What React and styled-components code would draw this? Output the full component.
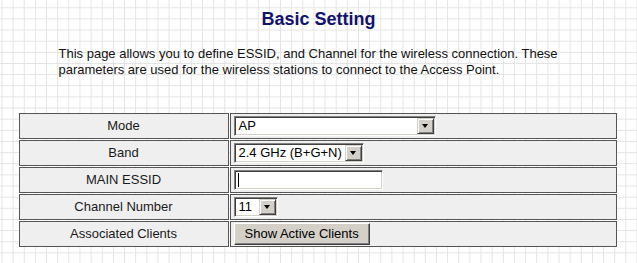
import React from 'react';
import styled, { createGlobalStyle } from 'styled-components';

const Global = createGlobalStyle`
  html, body { margin: 0; padding: 0; }
  body {
    width: 637px;
    height: 263px;
    overflow: hidden;
    background-color: #ffffff;
    background-image:
      linear-gradient(to right, #e3e3e3 1px, transparent 1px),
      linear-gradient(to bottom, #e3e3e3 1px, transparent 1px);
    background-size: 11.15px 11.15px;
    background-position: 1.5px 7.3px;
    font-family: "Liberation Sans", Arial, sans-serif;
  }
`;

const Page = styled.div`
  width: 602px;
  margin: 0 auto;
  padding-top: 8px;
`;

const Title = styled.h1`
  margin: 0;
  font-size: 18px;
  line-height: 22px;
  font-weight: bold;
  color: #12126e;
  text-align: center;
`;

const Intro = styled.p`
  margin: 15.5px 0 0 41px;
  width: 520px;
  font-size: 13px;
  line-height: 16px;
  color: #111;
`;

const Table = styled.table`
  margin-top: 34px;
  width: 600px;
  border: 0;
  border-spacing: 1px;
  border-collapse: separate;
  table-layout: fixed;
`;

const Cell = styled.td`
  box-sizing: border-box;
  height: 26px;
  padding: 0 3px;
  background: #efefef;
  border: 1px solid #555;
  font-size: 13px;
  color: #1a1a1a;
  vertical-align: middle;
`;

const LabelCell = styled(Cell)`
  width: 210px;
  text-align: center;
`;

const ValueCell = styled(Cell)`
  text-align: left;
`;

const Field = styled.div`
  display: inline-flex;
  align-items: stretch;
  box-sizing: border-box;
  width: ${(p) => p.$w}px;
  height: ${(p) => p.$h || 20}px;
  background: #fff;
  border-top: 1px solid #808080;
  border-left: 1px solid #808080;
  border-bottom: 1px solid #fff;
  border-right: 1px solid #fff;
  box-shadow: inset 1px 1px 0 #404040, inset -1px -1px 0 #d4d0c8;
  vertical-align: middle;
`;

const FieldText = styled.span`
  flex: 1;
  padding-left: 4px;
  font-size: 13px;
  line-height: 18px;
  color: #000;
  white-space: nowrap;
`;

const Arrow = styled.span`
  width: 17px;
  margin: 1px 1px 1px 0;
  box-sizing: border-box;
  background: #d4d0c8;
  border-top: 1px solid #d4d0c8;
  border-left: 1px solid #d4d0c8;
  border-right: 1px solid #404040;
  border-bottom: 1px solid #404040;
  box-shadow: inset 1px 1px 0 #fff, inset -1px -1px 0 #808080;
  display: flex;
  align-items: center;
  justify-content: center;
  &::after {
    content: '';
    width: 0;
    height: 0;
    border-left: 3.5px solid transparent;
    border-right: 3.5px solid transparent;
    border-top: 4px solid #000;
  }
`;

const Caret = styled.span`
  width: 1px;
  height: 14px;
  margin: 2px 0 0 3px;
  background: #000;
`;

const Button = styled.button`
  box-sizing: border-box;
  height: 22px;
  padding: 0 10px;
  background: #d4d0c8;
  border-top: 1px solid #fff;
  border-left: 1px solid #fff;
  border-right: 1px solid #404040;
  border-bottom: 1px solid #404040;
  box-shadow: inset -1px -1px 0 #808080;
  font-family: "Liberation Sans", Arial, sans-serif;
  font-size: 13px;
  color: #000;
  vertical-align: middle;
`;

const Select = ({ w, value }) => (
  <Field $w={w}>
    <FieldText>{value}</FieldText>
    <Arrow />
  </Field>
);

export default function App() {
  return (
    <>
      <Global />
      <Page>
        <Title>Basic Setting</Title>
        <Intro>
          This page allows you to define ESSID, and Channel for the wireless connection. These
          parameters are used for the wireless stations to connect to the Access Point.
        </Intro>
        <Table>
          <tbody>
            <tr>
              <LabelCell>Mode</LabelCell>
              <ValueCell><Select w={202} value="AP" /></ValueCell>
            </tr>
            <tr>
              <LabelCell>Band</LabelCell>
              <ValueCell><Select w={130} value="2.4 GHz (B+G+N)" /></ValueCell>
            </tr>
            <tr>
              <LabelCell>MAIN ESSID</LabelCell>
              <ValueCell>
                <Field $w={149}><Caret /></Field>
              </ValueCell>
            </tr>
            <tr>
              <LabelCell>Channel Number</LabelCell>
              <ValueCell><Select w={44} value="11" /></ValueCell>
            </tr>
            <tr>
              <LabelCell>Associated Clients</LabelCell>
              <ValueCell><Button>Show Active Clients</Button></ValueCell>
            </tr>
          </tbody>
        </Table>
      </Page>
    </>
  );
}
